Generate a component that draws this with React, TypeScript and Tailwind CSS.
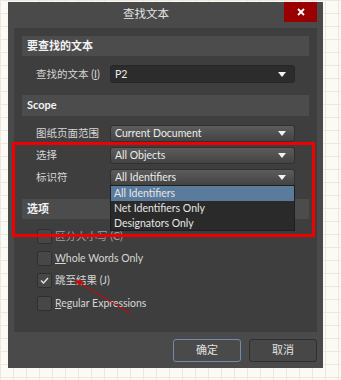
import React from 'react';

const font = { fontFamily: 'Lato, "Noto Sans CJK SC", sans-serif' };

const Arrow: React.FC = () => (
  <svg width="8" height="5" viewBox="0 0 8 5" className="shrink-0">
    <path d="M0 0 H8 L4 5 Z" fill="#f2f2f2" />
  </svg>
);

const Combo: React.FC<{ value: string; dark?: boolean }> = ({ value, dark }) => (
  <div
    className={`w-[185px] flex items-center justify-between pl-[4px] pr-[8px] rounded-[3px] border text-[10.5px] text-[#ececec] ${
      dark
        ? 'h-[18px] bg-[#2c2c2c] border-[#272727]'
        : 'h-[17px] bg-[linear-gradient(#5c5c5c,#434343)] border-[#303030]'
    }`}
  >
    <span className="leading-none">{value}</span>
    <Arrow />
  </div>
);

const Row: React.FC<{ label: React.ReactNode; children: React.ReactNode; className?: string }> = ({ label, children, className }) => (
  <div className={`flex items-center ${className ?? ''}`}>
    <div className="w-[88px] pl-[14px] text-[10.5px] text-[#d6d6d6] leading-none">{label}</div>
    {children}
  </div>
);

const Header: React.FC<{ title: string; className?: string }> = ({ title, className }) => (
  <div className={`h-[20px] bg-[#4c4c4c] flex items-center pl-[5px] text-[11px] font-bold text-[#f2f2f2] ${className ?? ''}`}>
    {title}
  </div>
);

const Check: React.FC<{ checked?: boolean; label: React.ReactNode; dim?: boolean; className?: string }> = ({ checked, label, dim, className }) => (
  <div className={`flex items-center pl-[15px] ${className ?? ''}`}>
    <div className="w-[15px] h-[15px] rounded-[2px] bg-[#474747] border border-[#2f2f2f] flex items-center justify-center">
      {checked && (
        <svg width="9" height="7" viewBox="0 0 9 7">
          <path d="M1 3.5 L3.5 6 L8 1" stroke="#e8e8e8" strokeWidth="1.3" fill="none" />
        </svg>
      )}
    </div>
    <span className={`ml-[3px] text-[10.5px] leading-none ${dim ? 'text-[#a0a0a0]' : 'text-[#d6d6d6]'}`}>{label}</span>
  </div>
);

export default function App() {
  return (
    <div
      className="relative w-[341px] h-[380px] overflow-hidden bg-[#fcfaf5] bg-[linear-gradient(to_right,#ece8e0_1px,transparent_1px),linear-gradient(to_bottom,#ece8e0_1px,transparent_1px)] bg-[size:13px_13px] pt-[2px] pl-[8px]"
      style={font}
    >
      <div className="w-[315px] h-[366px] bg-[#4a4a4a] flex flex-col">
        {/* title bar */}
        <div className="h-[26px] flex items-start">
          <div className="flex-1 h-[22px] flex items-center justify-center text-[11.5px] text-[#e4e4e4] pt-[2px]">查找文本</div>
          <div className="w-[33px] h-[20px] mr-[6px] bg-[#9b0000] flex items-center justify-center">
            <svg width="8" height="8" viewBox="0 0 8 8">
              <path d="M1 1 L7 7 M7 1 L1 7" stroke="#ffffff" strokeWidth="1.8" />
            </svg>
          </div>
        </div>

        {/* body */}
        <div className="mx-[6px] h-[304px] bg-[#3e3e3e] px-[8px] pt-[8px] flex flex-col">
          <Header title="要查找的文本" />
          <Row label={<>查找的文本 (<u>I</u>)</>} className="mt-[9px]">
            <Combo value="P2" dark />
          </Row>

          <Header title="Scope" className="mt-[12px] h-[21px]" />
          <Row label="图纸页面范围" className="mt-[9px]">
            <Combo value="Current Document" />
          </Row>
          <Row label="选择" className="mt-[5px]">
            <Combo value="All Objects" />
          </Row>
          <Row label="标识符" className="mt-[5px]">
            <Combo value="All Identifiers" />
          </Row>

          <Header title="选项" className="mt-[13px] h-[19px]" />
          <Check label="区分大小写 (C)" dim className="mt-[10px]" />
          <Check label={<><u>W</u>hole Words Only</>} className="mt-[7px]" />
          <Check label="跳至结果 (J)" checked className="mt-[7px]" />
          <Check label={<><u>R</u>egular Expressions</>} className="mt-[8px]" />
        </div>

        {/* buttons */}
        <div className="flex justify-end gap-[8px] mr-[6px] mt-[7px]">
          <div className="w-[68px] h-[23px] rounded-[3px] border border-[#6d8cb0] bg-[#4a4a4a] flex items-center justify-center text-[11px] text-[#e0e0e0]">确定</div>
          <div className="w-[68px] h-[23px] rounded-[3px] border border-[#2e2e2e] bg-[#474747] flex items-center justify-center text-[11px] text-[#e0e0e0]">取消</div>
        </div>
      </div>

      {/* open dropdown list */}
      <div className="absolute left-[110px] top-[185px] w-[185px] h-[46px] bg-[#2a2a2a] border border-[#1e1e1e] flex flex-col text-[10.5px] text-[#e6e6e6]">
        <div className="h-[15px] bg-[#5b7b9d] pl-[3px] flex items-center">All Identifiers</div>
        <div className="h-[15px] pl-[3px] flex items-center">Net Identifiers Only</div>
        <div className="h-[15px] pl-[3px] flex items-center">Designators Only</div>
      </div>

      {/* red highlight */}
      <div className="absolute left-[12px] top-[142px] w-[303px] h-[95px] border-[3px] border-[#f00000]" />

      {/* red arrow */}
      <svg className="absolute left-0 top-0" width="341" height="380" viewBox="0 0 341 380">
        <line x1="131" y1="314" x2="80" y2="283" stroke="#e00000" strokeWidth="1" />
        <path d="M75 280 L83 281 L80 286 Z" fill="#e00000" />
      </svg>
    </div>
  );
}
